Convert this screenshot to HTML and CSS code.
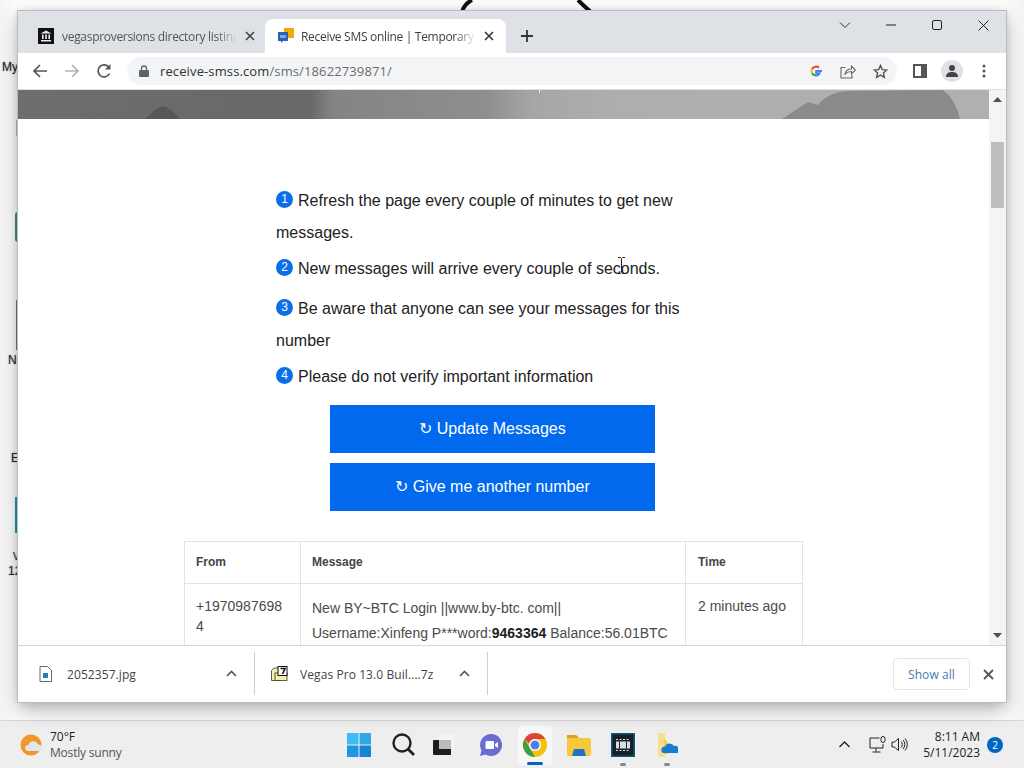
FILE: index.html
```html
<!DOCTYPE html>
<html lang="en">
<head>
<meta charset="utf-8">
<title>Receive SMS online</title>
<link rel="stylesheet" href="styles.css">
</head>
<body>
<div class="screen">
  <div class="desktop">
    <svg class="wall-curve" width="150" height="12" viewBox="0 0 150 12"><path d="M6 12 C8 5 12 2 16 0 M122 0 C126 4 130 8 135 12" fill="none" stroke="#111" stroke-width="4"/></svg>
    <span class="dlabel dl1">My</span>
    <span class="dlabel dl2">N</span>
    <span class="dlabel dl3">E</span>
    <span class="dlabel dl4">V</span>
    <span class="dlabel dl5">12</span>
    <span class="dfrag df1"></span><span class="dfrag df2"></span><span class="dfrag df3"></span><span class="dfrag df4"></span>

    <div class="window">
      <div class="tabstrip">
        <div class="tab">
          <svg class="fav" width="16" height="16" viewBox="0 0 16 16"><rect width="16" height="16" fill="#111"/><path d="M8 2.500 13.500 5.500H2.500ZM3 12h10v1.500H3ZM4 6.500h1.600V11H4ZM7.200 6.500h1.600V11H7.200ZM10.400 6.500H12V11h-1.600Z" fill="#eee"/></svg>
          <span class="tab-title">vegasproversions directory listing</span>
          <svg class="tab-x" width="10" height="10" viewBox="0 0 10 10"><path d="M1 1 9 9M9 1 1 9" stroke="#444" stroke-width="1.600"/></svg>
        </div>
        <div class="tab tab-active">
          <svg class="fav" width="17" height="16" viewBox="0 0 17 16"><path d="M7 0h10v10H11V6H7Z" fill="#f2a900"/><path d="M1 4h10v9H6l-2 2v-2H1Z" fill="#2b62b5"/><rect x="3" y="7" width="6" height="3" fill="#7fa8de"/></svg>
          <span class="tab-title">Receive SMS online | Temporary Pho</span>
          <svg class="tab-x" width="10" height="10" viewBox="0 0 10 10"><path d="M1 1 9 9M9 1 1 9" stroke="#333" stroke-width="1.600"/></svg>
        </div>
        <svg class="newtab" width="14" height="14" viewBox="0 0 14 14"><path d="M7 1v12M1 7h12" stroke="#333" stroke-width="1.800"/></svg>
        <div class="winbtns">
          <svg width="12" height="8" viewBox="0 0 12 8"><path d="M1 1.500 6 6.500 11 1.500" fill="none" stroke="#333"/></svg>
          <svg width="10" height="10" viewBox="0 0 10 10"><path d="M0 5h10" stroke="#222" stroke-width="1"/></svg>
          <svg width="10" height="10" viewBox="0 0 10 10"><rect x=".5" y=".5" width="9" height="9" rx="1.500" fill="none" stroke="#222"/></svg>
          <svg width="11" height="11" viewBox="0 0 11 11"><path d="M.5.5l10 10M10.500.5l-10 10" stroke="#222"/></svg>
        </div>
      </div>

      <div class="toolbar">
        <svg class="tb-ic" width="16" height="16" viewBox="0 0 16 16"><path d="M15 8H2M8 2 2 8l6 6" fill="none" stroke="#555" stroke-width="1.700"/></svg>
        <svg class="tb-ic" width="16" height="16" viewBox="0 0 16 16"><path d="M1 8h13M8 2l6 6-6 6" fill="none" stroke="#b4b4b4" stroke-width="1.700"/></svg>
        <svg class="tb-ic" width="16" height="16" viewBox="0 0 16 16"><path d="M13.500 10.500A6 6 0 1 1 13 4.500" fill="none" stroke="#555" stroke-width="1.700"/><path d="M14.500 1v5.500H9Z" fill="#555"/></svg>
        <div class="omnibox">
          <svg class="lock" width="10" height="12" viewBox="0 0 10 12"><path d="M2.500 5V3.500a2.500 2.500 0 0 1 5 0V5" fill="none" stroke="#5f6368" stroke-width="1.300"/><rect y="5" width="10" height="7" rx="1" fill="#5f6368"/></svg>
          <span class="url"><span class="url-host">receive-smss.com</span>/sms/18622739871/</span>
          <span class="omni-right">
            <svg width="14" height="14" viewBox="0 0 14 14"><path d="M13 7H7.200v2.200h3.400A3.700 3.700 0 0 1 7 11.500" fill="none" stroke="#4285f4" stroke-width="2"/><path d="M7 11.500A4.500 4.500 0 0 1 3 9" fill="none" stroke="#34a853" stroke-width="2"/><path d="M3 9a4.500 4.500 0 0 1 0-4" fill="none" stroke="#fbbc05" stroke-width="2"/><path d="M3 5a4.500 4.500 0 0 1 7-1.200" fill="none" stroke="#ea4335" stroke-width="2"/></svg>
            <svg width="16" height="15" viewBox="0 0 16 15"><path d="M5.500 3.500H1v10.500h11v-3M5 10c.5-3 3-5 6.500-5V2l4 4-4 4V7.500C9 7.500 6.500 8.500 5 10Z" fill="none" stroke="#666" stroke-width="1.100"/></svg>
            <svg width="15" height="15" viewBox="0 0 15 15"><path d="M7.500 1.500 9.300 5.600l4.500.4-3.400 3 1 4.400-3.900-2.300-3.900 2.300 1-4.400-3.400-3 4.500-.4Z" fill="none" stroke="#555" stroke-width="1.400"/></svg>
          </span>
        </div>
        <svg class="panel-ic" width="14" height="14" viewBox="0 0 14 14"><rect x="1" y="1" width="12" height="12" fill="#fff" stroke="#555" stroke-width="2"/><rect x="8" y="1" width="5" height="12" fill="#555"/></svg>
        <span class="avatar"><svg width="14" height="14" viewBox="0 0 14 14"><circle cx="7" cy="4" r="3" fill="#444"/><path d="M1 13c0-4 3-5 6-5s6 1 6 5Z" fill="#444"/></svg></span>
        <svg class="menu-ic" width="4" height="14" viewBox="0 0 4 14"><circle cx="2" cy="2" r="1.500" fill="#555"/><circle cx="2" cy="7" r="1.500" fill="#555"/><circle cx="2" cy="12" r="1.500" fill="#555"/></svg>
      </div>

      <div class="viewport">
        <div class="page">
          <svg class="hero" width="971" height="29" viewBox="0 0 971 29">
            <defs><linearGradient id="heroG"><stop offset="0" stop-color="#6e6e6e"/><stop offset=".3" stop-color="#686868"/><stop offset=".325" stop-color="#848484"/><stop offset=".48" stop-color="#8e8e8e"/><stop offset=".53" stop-color="#a6a6a6"/><stop offset=".62" stop-color="#aeaeae"/><stop offset="1" stop-color="#b0b0b0"/></linearGradient></defs>
            <rect width="971" height="29" fill="url(#heroG)"/>
            <path d="M128 29 Q138 17 145 16 Q152 17 162 29Z" fill="#585858"/>
            <path d="M764 29 L790 12 L800 15 Q810 2 830 1 L925 0 Q938 10 942 29Z" fill="#8a8a8a"/>
            <path d="M521.500 0v3" stroke="#e8e8e8"/>
          </svg>
          <div class="main">
            <div class="notes">
              <p class="note"><span class="num">1</span>Refresh the page every couple of minutes to get new messages.</p>
              <p class="note note-b"><span class="num">2</span>New messages will arrive every couple of seconds.</p>
              <p class="note note-c"><span class="num">3</span>Be aware that anyone can see your messages for this number</p>
              <p class="note note-b"><span class="num">4</span>Please do not verify important information</p>
            </div>
            <div class="actions">
              <a class="btn">↻ Update Messages</a>
              <a class="btn">↻ Give me another number</a>
            </div>
            <table class="msgs">
              <colgroup><col class="c-from"><col class="c-msg"><col class="c-time"></colgroup>
              <thead><tr><th>From</th><th>Message</th><th>Time</th></tr></thead>
              <tbody>
                <tr>
                  <td>+19709876984</td>
                  <td class="msg-cell">New BY~BTC Login ||www.by-btc. com||<br>Username:Xinfeng P***word:<b>9463364</b> Balance:56.01BTC</td>
                  <td>2 minutes ago</td>
                </tr>
              </tbody>
            </table>
          </div>
          <svg class="ibeam" width="9" height="17" viewBox="0 0 9 17"><path d="M1 .5h2.500L4.500 1.500 5.500.5H8M4.500 1.500v14M1 16.500h2.500l1-1 1 1H8" fill="none" stroke="#222"/></svg>
        </div>
        <div class="scrollbar">
          <svg class="sb-arrow" width="9" height="5" viewBox="0 0 9 5"><path d="M4.500 0 9 5H0Z" fill="#505050"/></svg>
          <div class="thumb"></div>
          <svg class="sb-arrow sb-down" width="9" height="5" viewBox="0 0 9 5"><path d="M0 0h9L4.500 5Z" fill="#505050"/></svg>
        </div>
      </div>

      <div class="shelf">
        <div class="dl">
          <svg width="13" height="16" viewBox="0 0 13 16"><path d="M1 .5h7.500l4 4V15.500H1Z" fill="#fff" stroke="#667"/><rect x="4" y="7" width="5" height="5" fill="#1f7fb8"/></svg>
          <span class="dl-name">2052357.jpg</span>
          <svg class="dl-chev" width="11" height="7" viewBox="0 0 11 7"><path d="M1 6 5.500 1.500 10 6" fill="none" stroke="#555" stroke-width="1.600"/></svg>
        </div>
        <div class="dl dl-second">
          <svg width="17" height="15" viewBox="0 0 17 15"><path d="M.5 4.500 3 2h6v12.500H.5Z" fill="#f6f0a8" stroke="#333" stroke-width=".8"/><rect x="4" y="7" width="12" height="7.500" fill="#f6f0a8" stroke="#333" stroke-width=".8"/><rect x="7" y=".5" width="9" height="9" fill="#fff" stroke="#111"/><path d="M9.500 2.500h4.500L11.500 8" fill="none" stroke="#111" stroke-width="1.600"/></svg>
          <span class="dl-name">Vegas Pro 13.0 Buil....7z</span>
          <svg class="dl-chev" width="11" height="7" viewBox="0 0 11 7"><path d="M1 6 5.500 1.500 10 6" fill="none" stroke="#555" stroke-width="1.600"/></svg>
        </div>
        <div class="shelf-end">
          <span class="showall">Show all</span>
          <svg width="11" height="11" viewBox="0 0 11 11"><path d="M1 1l9 9M10 1l-9 9" stroke="#555" stroke-width="1.800"/></svg>
        </div>
      </div>
    </div>
  </div>

  <div class="taskbar">
    <div class="weather">
      <svg width="24" height="22" viewBox="0 0 24 22"><circle cx="11" cy="11" r="10.500" fill="#f0972c"/><path d="M8 17a3 3 0 0 1 .5-6 5 5 0 0 1 9.500-.5 3.300 3.300 0 0 1 4 3.500 3 3 0 0 1-2.500 3Z" fill="#dfe6ee"/></svg>
      <div class="weather-text"><span class="w-temp">70°F</span><span class="w-desc">Mostly sunny</span></div>
    </div>
    <div class="apps">
      <span class="app"><svg width="24" height="24" viewBox="0 0 24 24"><path d="M0 0h11.500v11.500H0Z" fill="#3fbcf0"/><path d="M12.500 0H24v11.500H12.500Z" fill="#2fa8e8"/><path d="M0 12.500h11.500V24H0Z" fill="#1f96e0"/><path d="M12.500 12.500H24V24H12.500Z" fill="#1484d6"/></svg></span>
      <span class="app app-search"><svg width="24" height="24" viewBox="0 0 24 24"><circle cx="10" cy="10" r="8.500" fill="none" stroke="#222" stroke-width="2.400"/><path d="M16 16l6 6" stroke="#222" stroke-width="2.800"/></svg></span>
      <span class="app app-tv"><svg width="24" height="22" viewBox="0 0 24 22"><rect x="7" y="0" width="16" height="15" rx="2" fill="#f4f4f4"/><rect x="1" y="6" width="18" height="15" rx="1" fill="#1b1b1b"/><rect x="7" y="6" width="12" height="9" fill="#bcbcbc"/></svg></span>
      <span class="app"><svg width="24" height="24" viewBox="0 0 24 24"><path d="M12 1a11 11 0 1 1-5.500 20.500L1 23l1.500-5.500A11 11 0 0 1 12 1Z" fill="#6b6cd0"/><rect x="6.500" y="8" width="8.500" height="8" rx="1" fill="#fff"/><path d="M16 11l3-2v6l-3-2Z" fill="#fff"/></svg></span>
      <span class="app app-on">
        <svg width="24" height="24" viewBox="0 0 24 24"><circle cx="12" cy="12" r="12" fill="#f4c20d"/><path d="M12 0a12 12 0 0 1 10.400 6H12a6 6 0 0 0-5.800 4.500L1.600 6A12 12 0 0 1 12 0Z" fill="#dc4437"/><path d="M1.600 6 6.800 15 12.100 24A12 12 0 0 1 1.600 6Z" fill="#3f9c4a"/><circle cx="12" cy="12" r="6" fill="#fff"/><circle cx="12" cy="12" r="4.500" fill="#4a80f0"/></svg>
        <i class="run run-blue"></i>
      </span>
      <span class="app"><svg width="26" height="22" viewBox="0 0 26 22"><path d="M1 3a2 2 0 0 1 2-2h7l3 3h10a2 2 0 0 1 2 2v14a2 2 0 0 1-2 2H3a2 2 0 0 1-2-2Z" fill="#f8c83c"/><path d="M1 1h9l3 3H1Z" fill="#d9a520"/><path d="M8 15h10l2 7H6Z" fill="#1f72c4"/></svg></span>
      <span class="app"><svg width="24" height="24" viewBox="0 0 24 24"><rect width="24" height="24" fill="#0f5a78"/><rect x="1.500" y="1.500" width="21" height="21" fill="#15202b"/><rect x="5" y="8.500" width="14" height="7" fill="#dcdcdc"/><path d="M8.500 8.500v7M15.500 8.500v7" stroke="#15202b"/><path d="M5 6.500h14M5 17.500h14" stroke="#dcdcdc" stroke-width="1.200" stroke-dasharray="2 1.500"/></svg><i class="run"></i></span>
      <span class="app"><svg width="22" height="24" viewBox="0 0 22 24"><path d="M2 0h7v24H2Z" fill="#f9df8b"/><path d="M8 5l4 5v11H8Z" fill="#f2cc5c"/><path d="M7 20a3.500 3.500 0 0 1 2-6.500 5 5 0 0 1 9-.5 4 4 0 0 1 3.500 7Z" fill="#1a7bd0"/></svg><i class="run"></i></span>
    </div>
    <div class="tray">
      <svg class="tray-chev" width="11" height="7" viewBox="0 0 11 7"><path d="M.5 6 5.500 1 10.500 6" fill="none" stroke="#222" stroke-width="1.300"/></svg>
      <svg class="tray-net" width="17" height="17" viewBox="0 0 17 17"><path d="M10.500 2H1v10h13V8M7 12v3.500M3.500 16h8" fill="none" stroke="#222"/><rect x="12" y=".5" width="4" height="6" rx="2" fill="#eee" stroke="#222"/></svg>
      <svg class="tray-vol" width="17" height="15" viewBox="0 0 17 15"><path d="M1 5h2.500L7.500 1.500v12L3.500 10H1Z" fill="none" stroke="#222"/><path d="M10 4.500a4 4 0 0 1 0 6M12 3a6.500 6.500 0 0 1 0 9M14 1.500a9 9 0 0 1 0 12" fill="none" stroke="#222"/></svg>
      <div class="clock"><span>8:11 AM</span><span>5/11/2023</span></div>
      <span class="badge">2</span>
    </div>
  </div>
</div>
</body>
</html>
```
FILE: styles.css
```css
* { box-sizing: border-box; }
html, body { margin: 0; padding: 0; }
body { font-family: "Open Sans", "Liberation Sans", sans-serif; overflow: hidden; background: #f8f8f8; }
svg { flex: none; display: block; }

.screen { width: 1024px; height: 768px; display: flex; flex-direction: column; overflow: hidden; }

.desktop { position: relative; height: 720px; padding: 11px 18px 0; background: linear-gradient(90deg, #f4f4f4, #fcfcfc 1.5%, #fcfcfc 98%, #f4f4f4); }
.wall-curve { position: absolute; left: 456px; top: 0; }
.dlabel { position: absolute; left: 11px; font: 12px/14px "Liberation Sans", sans-serif; color: #222; text-shadow: 0 0 2px #999; }
.dl1 { left: 2px; top: 60px; }
.dl2 { left: 8px; top: 353px; }
.dl3 { left: 11px; top: 451px; }
.dl4 { left: 13px; top: 550px; font-size: 10px; }
.dl5 { left: 8px; top: 564px; }
.dfrag { position: absolute; width: 3px; }
.df1 { left: 15px; top: 212px; height: 30px; background: #4f8f62; border-radius: 3px 0 0 3px; }
.df2 { left: 16px; top: 300px; height: 50px; background: #777; width: 2px; }
.df3 { left: 15px; top: 497px; height: 36px; background: #1f9aa5; }
.df4 { left: 16px; top: 120px; height: 16px; background: #d9a9a9; width: 2px; }

.window { position: relative; width: 988px; height: 691px; display: flex; flex-direction: column; background: #fff; box-shadow: 0 0 0 1px #b9bcc0, 0 8px 18px rgba(0,0,0,.28), 0 0 8px rgba(0,0,0,.12); }

.tabstrip { height: 42px; flex: none; display: flex; align-items: flex-end; background: #dee1e6; padding-left: 7px; }
.tab { width: 240px; height: 34px; display: flex; align-items: center; padding: 0 8px 0 13px; font-size: 12px; letter-spacing: -.3px; color: #555; }
.tab-active { width: 241px; padding: 0 10px 0 12px; background: #fff; border-radius: 8px 8px 0 0; color: #3c4043; }
.fav { margin-right: 8px; }
.tab-active .fav { margin-right: 7px; }
.tab-title { flex: 1; overflow: hidden; white-space: nowrap; min-width: 0; -webkit-mask-image: linear-gradient(90deg, #000 88%, transparent); mask-image: linear-gradient(90deg, #000 88%, transparent); }
.tab-x { margin-left: 8px; margin-right: 2px; }
.newtab { margin: 0 0 10px 14px; }
.winbtns { margin-left: auto; align-self: flex-start; display: grid; grid-template-columns: repeat(4, 46px); justify-items: center; align-items: center; height: 26px; margin-top: 1px; }

.toolbar { height: 37px; flex: none; display: flex; align-items: center; background: #fff; padding-left: 14px; border-bottom: 1px solid #e0e0e0; }
.tb-ic { margin-right: 16px; }
.tb-ic:nth-child(3) { margin-right: 15px; }
.omnibox { width: 770px; height: 28px; border-radius: 14px; background: #f3f4f5; display: flex; align-items: center; padding: 0 9px 0 12px; }
.lock { margin-right: 11px; }
.url { font-size: 13px; color: #6a6d70; letter-spacing: .12px; }
.url-host { color: #2f3133; }
.omni-right { margin-left: auto; display: flex; align-items: center; gap: 17px; }
.panel-ic { margin-left: 16px; }
.avatar { width: 22px; height: 22px; border-radius: 50%; background: #dfe1e5; display: flex; align-items: center; justify-content: center; margin-left: 14px; }
.menu-ic { margin-left: 19px; }

.viewport { flex: 1; min-height: 0; display: flex; overflow: hidden; }
.page { position: relative; flex: 1; min-width: 0; overflow: hidden; background: #fff; }
.hero { display: block; }
.main { padding: 66px 0 0 166px; font-family: "Liberation Sans", Arial, sans-serif; }
.notes { margin-left: 92px; width: 420px; font-size: 16px; line-height: 32px; color: #222; }
.note { margin: 0; }
.note-b { margin-top: 4px; }
.note-c { margin-top: 8px; }
.num { display: inline-flex; align-items: center; justify-content: center; width: 17px; height: 17px; border-radius: 50%; background: #0b6fe8; color: #fff; font-size: 12px; line-height: 1; margin-right: 5px; vertical-align: 3px; }
.actions { margin: 12px 0 0 146px; width: 325px; display: flex; flex-direction: column; gap: 10px; }
.btn { height: 48px; display: flex; align-items: center; justify-content: center; padding-bottom: 2px; background: #0069ee; color: #fff; font-size: 16px; }
.msgs { margin-top: 30px; width: 618px; border-collapse: collapse; table-layout: fixed; font-size: 14px; color: #4a4a4a; }
.c-from { width: 116px; }
.c-msg { width: 385px; }
.c-time { width: 117px; }
.msgs th, .msgs td { border: 1px solid #e2e2e2; padding: 12px 12px 12px 11px; text-align: left; vertical-align: top; line-height: 20px; word-break: break-all; overflow-wrap: anywhere; }
.msgs th:last-child, .msgs td:last-child { padding-left: 12px; }
.msgs th { font-size: 12px; font-weight: bold; color: #444; padding-top: 10px; padding-bottom: 11px; line-height: 20px; }
.msgs td { line-height: 20px; padding-top: 12px; }
.msgs td.msg-cell { line-height: 25px; padding-top: 12px; padding-bottom: 30px; word-break: normal; overflow-wrap: normal; }
.msgs b { color: #222; }
.ibeam { position: absolute; left: 599px; top: 167px; }

.scrollbar { width: 17px; flex: none; background: #f4f4f4; display: flex; flex-direction: column; align-items: center; padding-top: 7px; padding-bottom: 7px; }
.thumb { width: 13px; height: 66px; margin-top: 40px; background: #bebebe; }
.sb-down { margin-top: auto; }

.shelf { height: 57px; flex: none; background: #fff; border-top: 1px solid #d6d6d6; display: flex; align-items: center; font-size: 12px; letter-spacing: .08px; color: #444; }
.dl { width: 237px; height: 43px; display: flex; align-items: center; border-right: 1px solid #d0d0d0; padding: 0 17px 0 21px; margin-bottom: 1px; }
.dl-name { margin-left: 15px; margin-right: auto; padding-top: 2px; }
.dl-second { width: 233px; padding-left: 16px; }
.dl-second .dl-name { margin-left: 12px; }
.shelf-end { margin-left: auto; display: flex; align-items: center; gap: 13px; padding-right: 12px; }
.showall { width: 77px; height: 32px; border: 1px solid #e2e5e8; border-radius: 4px; display: flex; align-items: center; justify-content: center; color: #4a79b4; font-size: 12px; }

.taskbar { height: 48px; flex: none; background: #eeeeee; border-top: 1px solid #d9d9d9; display: grid; grid-template-columns: 337px 353px 1fr; align-items: center; }
.weather { display: flex; align-items: center; padding-left: 20px; gap: 6px; }
.weather-text { display: flex; flex-direction: column; font-size: 12px; line-height: 16px; }
.w-temp { color: #222; }
.w-desc { color: #555; letter-spacing: -.2px; }
.apps { display: grid; grid-template-columns: repeat(8, 44px); height: 46px; }
.app { position: relative; display: flex; align-items: center; justify-content: center; }
.app-search { padding-left: 2px; }
.app-tv { padding-right: 6px; }
.app-on { background: #f7f7f7; margin: 4px 5px 3px; border-radius: 4px; }
.run { position: absolute; left: 50%; bottom: 2px; width: 6px; height: 3px; margin-left: -3px; background: #888; border-radius: 2px; }
.run-blue { width: 16px; margin-left: -8px; background: #0067c0; bottom: 0; }
.tray { display: flex; align-items: center; padding-left: 149px; }
.tray-net { margin-left: 19px; }
.tray-vol { margin-left: 5px; }
.clock { display: flex; flex-direction: column; align-items: flex-end; font-size: 12px; line-height: 16px; color: #222; width: 71px; margin-left: 1px; }
.badge { width: 16px; height: 16px; border-radius: 50%; background: #0067c0; color: #fff; font-size: 10px; display: flex; align-items: center; justify-content: center; margin-left: 7px; }
```
